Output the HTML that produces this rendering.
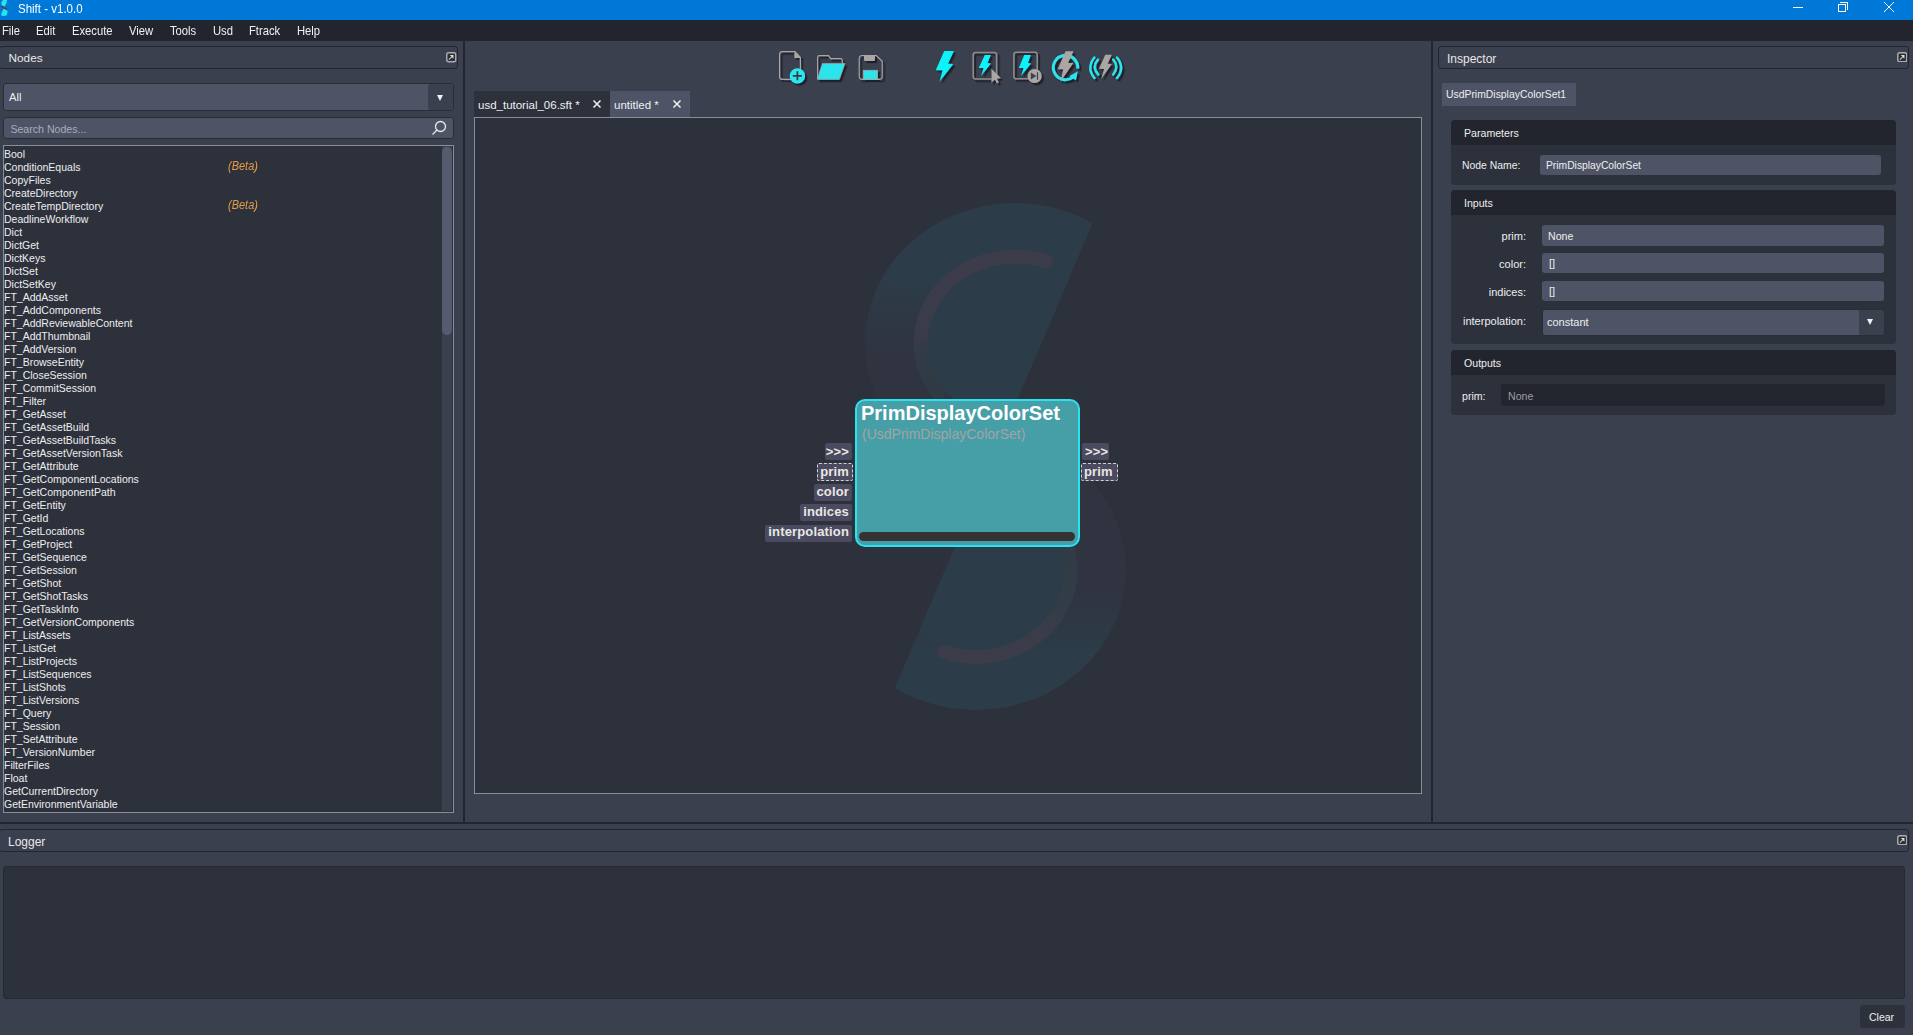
<!DOCTYPE html>
<html><head><meta charset="utf-8">
<style>
*{box-sizing:border-box;margin:0;padding:0}
html,body{width:1913px;height:1035px;overflow:hidden;background:#3b404e;font-family:"Liberation Sans",sans-serif;color:#e6e6e6}
.a{position:absolute}
.t{position:absolute;white-space:pre;line-height:1}
#title{left:0;top:0;width:1913px;height:20px;background:#0078d7}
#menu{left:0;top:20px;width:1913px;height:21px;background:#22252e}
.vsep{background:#23262e}
.hdr{background:#3b404e;border:1px solid #23262e;border-radius:3px}
.fld{background:#4e5466;border:1px solid #2a2d36;border-radius:3px}
.list{background:#2d313c;border:1px solid #8a8d93}
.node{font-size:10.5px;color:#eeeeee}
.grp{background:#2d313c;border-radius:4px}
.gh{background:#22252e;border-radius:4px 4px 0 0}
.fl{background:#4e5466;border-radius:3px}
.lbl{font-size:11px;color:#e6e6e6}
.port{background:#4a4b60;border-radius:2px;color:#ececec;font-weight:700;font-size:13px}
.pt{font-size:13px;font-weight:700;color:#e9e7e2;letter-spacing:0.15px}
.lbr{font-size:11px;color:#eeeeee}
.beta{font-size:12px;font-style:italic;color:#e29c48;transform:scaleX(0.915);transform-origin:0 0}
.flt{width:11px;height:11px;border:1.5px solid #b8b8bc;border-radius:3px}
.flt:after{content:"";position:absolute;left:2px;top:2px;width:4px;height:4px;border-top:1.2px solid #d8d8d8;border-right:1.2px solid #d8d8d8}
.tri{width:0;height:0;border-left:3.7px solid transparent;border-right:3.7px solid transparent;border-top:6.4px solid #f0f0f0}
.mi{font-size:12.4px;color:#f0f0f0;top:24.6px;transform:scaleX(0.907);transform-origin:0 0}
</style></head><body>
<!-- title bar -->
<div id="title" class="a"></div>
<svg class="a" style="left:0;top:0" width="12" height="18" viewBox="0 0 12 18"><path d="M3 0 H7 L6.5 2.5 L4.8 6.5 L2 5.8 L1.3 2.5 Z" fill="#22e6ee"/><path d="M3.5 9 L6.8 9.3 L7.6 12 L6.6 15.5 L3 16 L1 15 L2 12 Z" fill="#22e6ee"/><path d="M1.2 6 L7 9.6" stroke="#5a3f48" stroke-width="1.6"/></svg>
<div class="t" style="left:17.5px;top:2.5px;font-size:12.5px;color:#ffffff;transform:scaleX(0.92);transform-origin:0 0">Shift - v1.0.0</div>
<div class="a" style="left:1793px;top:7px;width:10px;height:1px;background:#fff"></div>
<div class="a" style="left:1838px;top:4px;width:8px;height:8px;border:1px solid #fff"></div>
<div class="a" style="left:1840px;top:2px;width:8px;height:8px;border-top:1px solid #fff;border-right:1px solid #fff"></div>
<svg class="a" style="left:1883px;top:1px" width="12" height="12" viewBox="0 0 12 12"><path d="M1 1 L11 11 M11 1 L1 11" stroke="#fff" stroke-width="1"/></svg>
<div id="menu" class="a"></div>
<div class="t mi" style="left:2px">File</div>
<div class="t mi" style="left:36px">Edit</div>
<div class="t mi" style="left:72px">Execute</div>
<div class="t mi" style="left:129px">View</div>
<div class="t mi" style="left:170px">Tools</div>
<div class="t mi" style="left:213px">Usd</div>
<div class="t mi" style="left:249px">Ftrack</div>
<div class="t mi" style="left:297px">Help</div>

<!-- left dock -->
<div class="a hdr" style="left:-1px;top:46px;width:459px;height:23px"></div>
<div class="t" style="left:8.5px;top:52.8px;font-size:11.8px;color:#e8e8e8">Nodes</div>
<svg class="a" style="left:446px;top:52px" width="10.5" height="10.5" viewBox="0 0 11 11"><rect x="0.8" y="0.8" width="9.4" height="9.4" rx="2" fill="#2c2f3a" stroke="#abacb3" stroke-width="1.5"/><path d="M4 3.2 H7.8 V7 Z" fill="#dfe4cc"/><path d="M3 8 L6 5" stroke="#c8ccc0" stroke-width="1.1"/></svg>
<div class="a fld" style="left:3px;top:83px;width:451px;height:28px"></div>
<div class="a" style="left:428px;top:84px;width:25px;height:26px;background:#3b404e;border-radius:3px"></div>
<div class="a tri" style="left:437px;top:94.5px"></div>
<div class="t" style="left:9px;top:92.4px;font-size:11.2px;color:#eeeeee">All</div>
<div class="a fld" style="left:3px;top:117px;width:451px;height:22px"></div>
<div class="t" style="left:10.4px;top:123.7px;font-size:10.6px;color:#a9adbd">Search Nodes...</div>
<svg class="a" style="left:430px;top:119px" width="18" height="18" viewBox="0 0 18 18"><circle cx="10.5" cy="7.5" r="5" fill="none" stroke="#e8e8e8" stroke-width="1.3"/><line x1="7" y1="11" x2="2.5" y2="15.5" stroke="#e8e8e8" stroke-width="1.3"/></svg>
<div class="a list" style="left:3px;top:145px;width:451px;height:668px"></div>
<div class="a" style="left:442px;top:146px;width:10px;height:665px;background:#3b404e"></div>
<div class="a" style="left:442px;top:147px;width:10px;height:188px;background:#565b70;border-radius:5px"></div>
<div class="t node" style="left:4px;top:149px">Bool</div>
<div class="t node" style="left:4px;top:162px">ConditionEquals</div>
<div class="t node" style="left:4px;top:175px">CopyFiles</div>
<div class="t node" style="left:4px;top:188px">CreateDirectory</div>
<div class="t node" style="left:4px;top:201px">CreateTempDirectory</div>
<div class="t node" style="left:4px;top:214px">DeadlineWorkflow</div>
<div class="t node" style="left:4px;top:227px">Dict</div>
<div class="t node" style="left:4px;top:240px">DictGet</div>
<div class="t node" style="left:4px;top:253px">DictKeys</div>
<div class="t node" style="left:4px;top:266px">DictSet</div>
<div class="t node" style="left:4px;top:279px">DictSetKey</div>
<div class="t node" style="left:4px;top:292px">FT_AddAsset</div>
<div class="t node" style="left:4px;top:305px">FT_AddComponents</div>
<div class="t node" style="left:4px;top:318px">FT_AddReviewableContent</div>
<div class="t node" style="left:4px;top:331px">FT_AddThumbnail</div>
<div class="t node" style="left:4px;top:344px">FT_AddVersion</div>
<div class="t node" style="left:4px;top:357px">FT_BrowseEntity</div>
<div class="t node" style="left:4px;top:370px">FT_CloseSession</div>
<div class="t node" style="left:4px;top:383px">FT_CommitSession</div>
<div class="t node" style="left:4px;top:396px">FT_Filter</div>
<div class="t node" style="left:4px;top:409px">FT_GetAsset</div>
<div class="t node" style="left:4px;top:422px">FT_GetAssetBuild</div>
<div class="t node" style="left:4px;top:435px">FT_GetAssetBuildTasks</div>
<div class="t node" style="left:4px;top:448px">FT_GetAssetVersionTask</div>
<div class="t node" style="left:4px;top:461px">FT_GetAttribute</div>
<div class="t node" style="left:4px;top:474px">FT_GetComponentLocations</div>
<div class="t node" style="left:4px;top:487px">FT_GetComponentPath</div>
<div class="t node" style="left:4px;top:500px">FT_GetEntity</div>
<div class="t node" style="left:4px;top:513px">FT_GetId</div>
<div class="t node" style="left:4px;top:526px">FT_GetLocations</div>
<div class="t node" style="left:4px;top:539px">FT_GetProject</div>
<div class="t node" style="left:4px;top:552px">FT_GetSequence</div>
<div class="t node" style="left:4px;top:565px">FT_GetSession</div>
<div class="t node" style="left:4px;top:578px">FT_GetShot</div>
<div class="t node" style="left:4px;top:591px">FT_GetShotTasks</div>
<div class="t node" style="left:4px;top:604px">FT_GetTaskInfo</div>
<div class="t node" style="left:4px;top:617px">FT_GetVersionComponents</div>
<div class="t node" style="left:4px;top:630px">FT_ListAssets</div>
<div class="t node" style="left:4px;top:643px">FT_ListGet</div>
<div class="t node" style="left:4px;top:656px">FT_ListProjects</div>
<div class="t node" style="left:4px;top:669px">FT_ListSequences</div>
<div class="t node" style="left:4px;top:682px">FT_ListShots</div>
<div class="t node" style="left:4px;top:695px">FT_ListVersions</div>
<div class="t node" style="left:4px;top:708px">FT_Query</div>
<div class="t node" style="left:4px;top:721px">FT_Session</div>
<div class="t node" style="left:4px;top:734px">FT_SetAttribute</div>
<div class="t node" style="left:4px;top:747px">FT_VersionNumber</div>
<div class="t node" style="left:4px;top:760px">FilterFiles</div>
<div class="t node" style="left:4px;top:773px">Float</div>
<div class="t node" style="left:4px;top:786px">GetCurrentDirectory</div>
<div class="t node" style="left:4px;top:799px">GetEnvironmentVariable</div>
<div class="t beta" style="left:227.5px;top:159.8px">(Beta)</div>
<div class="t beta" style="left:227.5px;top:198.8px">(Beta)</div>

<!-- separators -->
<div class="a vsep" style="left:463px;top:40px;width:2px;height:784px"></div>
<div class="a vsep" style="left:1431px;top:40px;width:2px;height:784px"></div>
<div class="a vsep" style="left:0;top:822px;width:1913px;height:2px"></div>
<!-- tabs -->
<div class="a" style="left:474px;top:91px;width:136px;height:26px;background:#2d313c"></div>
<div class="a" style="left:610px;top:91px;width:80px;height:26px;background:#4e5466"></div>
<div class="t" style="left:478px;top:100px;font-size:11.5px;color:#f0f0f0">usd_tutorial_06.sft *</div>
<div class="t" style="left:614px;top:100px;font-size:11.5px;color:#f0f0f0">untitled *</div>
<svg class="a" style="left:592px;top:99px" width="10" height="10" viewBox="0 0 10 10"><path d="M1.5 1.5 L8.5 8.5 M8.5 1.5 L1.5 8.5" stroke="#f0f0f0" stroke-width="1.5"/></svg>
<svg class="a" style="left:672px;top:99px" width="10" height="10" viewBox="0 0 10 10"><path d="M1.5 1.5 L8.5 8.5 M8.5 1.5 L1.5 8.5" stroke="#f0f0f0" stroke-width="1.5"/></svg>
<!-- canvas -->
<div class="a" style="left:474px;top:117px;width:948px;height:677px;background:#2d313c;border:1px solid #8a8d93;overflow:hidden" id="canvas"></div>

<!-- toolbar -->
<svg class="a" style="left:0;top:0" width="1200" height="90" viewBox="0 0 1200 90">
<defs><filter id="sh" x="-30%" y="-30%" width="160%" height="160%"><feDropShadow dx="2.2" dy="2.2" stdDeviation="0.7" flood-color="#1c1e26" flood-opacity="0.95"/></filter></defs>
<g filter="url(#sh)">
 <path d="M782.1 51.6 H795 L800.4 57.4 V76.5 Q800.4 79.4 797.5 79.4 H782.1 Q779.6 79.4 779.6 76.5 V54.5 Q779.6 51.6 782.1 51.6 Z" fill="none" stroke="#a9a6a4" stroke-width="1.2"/>
 <path d="M794.4 51.8 L800.6 58 H794.4 Z" fill="#a9a6a4"/>
 <circle cx="797.4" cy="75.9" r="7.7" fill="#2be8f0"/>
 <path d="M792.8 75.9 H801.9 M797.4 71.3 V80.3" stroke="#3b3a46" stroke-width="1.8"/>
</g>
<g filter="url(#sh)">
 <path d="M817.6 79 V57.5 Q817.6 55.6 819.5 55.6 H828.5 L830.6 58.6 H840.5 Q842.3 58.6 842.3 60.5 V63.4" fill="none" stroke="#a9a6a4" stroke-width="1.1"/>
 <path d="M822.4 63.5 H844.9 L839.3 79.4 H817.3 Z" fill="#2be5ec" stroke="#a9a6a4" stroke-width="0.6"/>
</g>
<g filter="url(#sh)">
 <path d="M862.3 55.5 H876.3 L882.2 61.3 V76.2 Q882.2 79.4 879 79.4 H862.3 Q859.2 79.4 859.2 76.2 V58.6 Q859.2 55.5 862.3 55.5 Z" fill="none" stroke="#a9a6a4" stroke-width="1.1"/>
 <path d="M864 55.5 H875 V59.5 Q875 61 873.5 61 H865.5 Q864 61 864 59.5 Z" fill="#a9a6a4"/>
 <rect x="863.3" y="70.3" width="14.2" height="9" fill="#2be5ec" stroke="#a9a6a4" stroke-width="0.8"/>
</g>
<g filter="url(#sh)">
 <path d="M944.2 51.1 H953.9 L947.9 63.65 L953.3 64.1 L939.5 81.7 L942.6 70.35 H935.7 Z" fill="#08f2fb"/>
</g>
<g filter="url(#sh)">
 <rect x="973.2" y="52.5" width="23.4" height="26.4" rx="2.3" fill="none" stroke="#8f8b8c" stroke-width="1.55"/>
 <path d="M984.8 55.1 H990.9 L987.4 63 L990.9 63.45 L981.1 76 L983.6 68.1 H978.7 Z" fill="#08f2fb"/>
 <path d="M991.5 68.7 L1001 78.3 L996.8 78.6 L998.8 82.6 L996.9 83.4 L995 79.4 L991.6 82.4 Z" fill="#a9a6a4"/>
</g>
<g filter="url(#sh)">
 <rect x="1013.9" y="52.3" width="23.3" height="26.4" rx="2.3" fill="none" stroke="#8f8b8c" stroke-width="1.55"/>
 <path d="M1024.2 55.1 H1030.9 L1027.9 63 L1031.1 63.45 L1021 76 L1023.6 68.1 H1018.8 Z" fill="#08f2fb"/>
 <circle cx="1034.6" cy="76" r="7.1" fill="#a9a6a4"/>
 <path d="M1030.9 72.6 V79.4 L1036.3 76 Z" fill="#3b3f4c"/>
 <rect x="1036.9" y="72.3" width="1.2" height="7.4" fill="#3b3f4c"/>
</g>
<g filter="url(#sh)">
 <path d="M1077.65 68.66 A12.2 12.2 0 1 0 1073.3 76.95" fill="none" stroke="#2be5ec" stroke-width="3"/>
 <path d="M1069.3 76.3 L1077.8 71.2 L1075.9 80.2 Z" fill="#2be5ec"/>
 <path d="M1065.6 51.3 H1073.5 L1068 63 H1073.3 L1060.4 81.7 L1063.2 69.3 H1057.7 Z" fill="#a9a6a4"/>
</g>
<g filter="url(#sh)">
 <path d="M1094.4 57.4 Q1086.2 67.7 1094.4 78.1 M1098 59.6 Q1091.5 67.1 1098.2 74.6 M1117 57.4 Q1125.2 67.7 1117 78.1 M1113.2 59.6 Q1119.4 67.1 1113.2 74.6" fill="none" stroke="#2be5ec" stroke-width="2.4" stroke-linecap="round"/>
 <path d="M1105.3 54.7 H1111.8 L1107.6 63.65 L1111.8 64.1 L1101.3 78.9 L1104.1 69.1 L1099 68.7 Z" fill="#a9a6a4"/>
</g>
</svg>

<!-- canvas logo -->
<svg class="a" style="left:475px;top:118px" width="946" height="675" viewBox="475 118 946 675">
<defs>
 <clipPath id="cu"><path d="M600 0 H1187.4 L762.2 1000 H600 Z"/></clipPath>
 <clipPath id="cl"><path d="M1187.4 0 L762.2 1000 H1300 V0 Z"/></clipPath>
 <linearGradient id="bu" x1="0" y1="280" x2="0" y2="350" gradientUnits="userSpaceOnUse"><stop offset="0" stop-color="#2c3c48"/><stop offset="1" stop-color="#2f3440"/></linearGradient>
 <linearGradient id="bl" x1="0" y1="650" x2="0" y2="595" gradientUnits="userSpaceOnUse"><stop offset="0" stop-color="#2c3c48"/><stop offset="1" stop-color="#2f3440"/></linearGradient>
 <linearGradient id="gu" x1="0" y1="250" x2="0" y2="400" gradientUnits="userSpaceOnUse"><stop offset="0" stop-color="#3c3c4a"/><stop offset="0.55" stop-color="#3b3c4a"/><stop offset="0.65" stop-color="#323b46"/><stop offset="1" stop-color="#2f3a45"/></linearGradient>
 <linearGradient id="gl" x1="0" y1="665" x2="0" y2="545" gradientUnits="userSpaceOnUse"><stop offset="0" stop-color="#3c3c4a"/><stop offset="0.27" stop-color="#3b3c4a"/><stop offset="0.42" stop-color="#333d48"/><stop offset="1" stop-color="#2f3b46"/></linearGradient>
</defs>
<g filter="url(#sh)">
 <path d="M782.1 51.6 H795 L800.4 57.4 V76.5 Q800.4 79.4 797.5 79.4 H782.1 Q779.6 79.4 779.6 76.5 V54.5 Q779.6 51.6 782.1 51.6 Z" fill="none" stroke="#a9a6a4" stroke-width="1.2"/>
 <path d="M794.4 51.8 L800.6 58 H794.4 Z" fill="#a9a6a4"/>
 <circle cx="797.4" cy="75.9" r="7.7" fill="#2be8f0"/>
 <path d="M792.8 75.9 H801.9 M797.4 71.3 V80.3" stroke="#3b3a46" stroke-width="1.8"/>
</g>
<g filter="url(#sh)">
 <path d="M817.6 79 V57.5 Q817.6 55.6 819.5 55.6 H828.5 L830.6 58.6 H840.5 Q842.3 58.6 842.3 60.5 V63.4" fill="none" stroke="#a9a6a4" stroke-width="1.1"/>
 <path d="M822.4 63.5 H844.9 L839.3 79.4 H817.3 Z" fill="#2be5ec" stroke="#a9a6a4" stroke-width="0.6"/>
</g>
<g filter="url(#sh)">
 <path d="M862.3 55.5 H876.3 L882.2 61.3 V76.2 Q882.2 79.4 879 79.4 H862.3 Q859.2 79.4 859.2 76.2 V58.6 Q859.2 55.5 862.3 55.5 Z" fill="none" stroke="#a9a6a4" stroke-width="1.1"/>
 <path d="M864 55.5 H875 V59.5 Q875 61 873.5 61 H865.5 Q864 61 864 59.5 Z" fill="#a9a6a4"/>
 <rect x="863.3" y="70.3" width="14.2" height="9" fill="#2be5ec" stroke="#a9a6a4" stroke-width="0.8"/>
</g>
<g filter="url(#sh)">
 <path d="M944.2 51.1 H953.9 L947.9 63.65 L953.3 64.1 L939.5 81.7 L942.6 70.35 H935.7 Z" fill="#08f2fb"/>
</g>
<g filter="url(#sh)">
 <rect x="973.2" y="52.5" width="23.4" height="26.4" rx="2.3" fill="none" stroke="#8f8b8c" stroke-width="1.55"/>
 <path d="M984.8 55.1 H990.9 L987.4 63 L990.9 63.45 L981.1 76 L983.6 68.1 H978.7 Z" fill="#08f2fb"/>
 <path d="M991.5 68.7 L1001 78.3 L996.8 78.6 L998.8 82.6 L996.9 83.4 L995 79.4 L991.6 82.4 Z" fill="#a9a6a4"/>
</g>
<g filter="url(#sh)">
 <rect x="1013.9" y="52.3" width="23.3" height="26.4" rx="2.3" fill="none" stroke="#8f8b8c" stroke-width="1.55"/>
 <path d="M1024.2 55.1 H1030.9 L1027.9 63 L1031.1 63.45 L1021 76 L1023.6 68.1 H1018.8 Z" fill="#08f2fb"/>
 <circle cx="1034.6" cy="76" r="7.1" fill="#a9a6a4"/>
 <path d="M1030.9 72.6 V79.4 L1036.3 76 Z" fill="#3b3f4c"/>
 <rect x="1036.9" y="72.3" width="1.2" height="7.4" fill="#3b3f4c"/>
</g>
<g filter="url(#sh)">
 <path d="M1078.3 71.5 A12 12 0 1 0 1062 79.4" fill="none" stroke="#2be5ec" stroke-width="3.3"/>
 <path d="M1064.5 78.6 Q1071 78.5 1073.5 75" fill="none" stroke="#2be5ec" stroke-width="3.3"/>
 <path d="M1069.5 74.2 L1077.3 71.8 L1076.2 80.2 Z" fill="#2be5ec"/>
 <path d="M1065.6 51.3 H1073.5 L1068 63 H1073.3 L1060.4 81.7 L1063.2 69.3 H1057.7 Z" fill="#a9a6a4"/>
</g>
<g filter="url(#sh)">
 <path d="M1094.4 57.4 Q1086.2 67.7 1094.4 78.1 M1098 59.6 Q1091.5 67.1 1098.2 74.6 M1117 57.4 Q1125.2 67.7 1117 78.1 M1113.2 59.6 Q1119.4 67.1 1113.2 74.6" fill="none" stroke="#2be5ec" stroke-width="2.4" stroke-linecap="round"/>
 <path d="M1105.3 54.7 H1111.8 L1107.6 63.65 L1111.8 64.1 L1101.3 78.9 L1104.1 69.1 L1099 68.7 Z" fill="#a9a6a4"/>
</g>
</svg>

<!-- canvas logo -->
<svg class="a" style="left:475px;top:118px" width="946" height="675" viewBox="475 118 946 675">
<defs>
 <clipPath id="cu"><path d="M600 0 H1187.4 L762.2 1000 H600 Z"/></clipPath>
 <clipPath id="cl"><path d="M1187.4 0 L762.2 1000 H1300 V0 Z"/></clipPath>
 <linearGradient id="bu" x1="0" y1="265" x2="0" y2="395" gradientUnits="userSpaceOnUse"><stop offset="0" stop-color="#2c3c48"/><stop offset="1" stop-color="#2f3440"/></linearGradient>
 <linearGradient id="bl" x1="0" y1="648" x2="0" y2="518" gradientUnits="userSpaceOnUse"><stop offset="0" stop-color="#2c3c48"/><stop offset="1" stop-color="#2f3440"/></linearGradient>
 <linearGradient id="gu" x1="0" y1="250" x2="0" y2="400" gradientUnits="userSpaceOnUse"><stop offset="0" stop-color="#3c3c4a"/><stop offset="0.5" stop-color="#3b3c4a"/><stop offset="0.68" stop-color="#313a46"/><stop offset="1" stop-color="#2e3844"/></linearGradient>
 <linearGradient id="gl" x1="0" y1="663" x2="0" y2="513" gradientUnits="userSpaceOnUse"><stop offset="0" stop-color="#3c3c4a"/><stop offset="0.5" stop-color="#3b3c4a"/><stop offset="0.68" stop-color="#313a46"/><stop offset="1" stop-color="#2e3844"/></linearGradient>
</defs>
<g clip-path="url(#cu)">
 <ellipse cx="1015" cy="343" rx="150" ry="140" fill="url(#bu)"/>
 <ellipse cx="1015" cy="343" rx="88" ry="79.5" fill="#2c3c48"/>
 <path d="M1046 261.2 A95 86.5 0 0 0 938 393" fill="none" stroke="url(#gu)" stroke-width="14" stroke-linecap="round"/>
</g>
<g clip-path="url(#cl)">
 <ellipse cx="975.7" cy="570" rx="150" ry="140" fill="url(#bl)"/>
 <ellipse cx="975.7" cy="570" rx="88" ry="79.5" fill="#2c3c48"/>
 <path d="M944.2 652 A95 86.5 0 0 0 1052.7 520" fill="none" stroke="url(#gl)" stroke-width="14" stroke-linecap="round"/>
</g>
</svg>
<!-- node -->
<div class="a" style="left:855px;top:399px;width:225px;height:148px;background:#469ea7;border:2px solid #2be3f0;border-radius:10px"></div>
<div class="t" style="left:861px;top:402.5px;font-size:20px;font-weight:700;color:#ffffff">PrimDisplayColorSet</div>
<div class="t" style="left:862px;top:427px;font-size:14px;color:#a4a4a4">(UsdPrimDisplayColorSet)</div>
<div class="a" style="left:859px;top:532px;width:216px;height:8.5px;background:#333333;border-radius:5px"></div>
<!-- ports -->
<div class="a port" style="left:825px;top:443px;width:27px;height:17px"></div>
<div class="a port" style="left:817px;top:463px;width:36px;height:18px;border:1.2px dashed #d0d0d4"></div>
<div class="a port" style="left:814px;top:484px;width:38px;height:16.5px"></div>
<div class="a port" style="left:800px;top:504px;width:52px;height:17px"></div>
<div class="a port" style="left:764.5px;top:525px;width:87.5px;height:16.5px"></div>
<div class="a port" style="left:1082px;top:443px;width:27px;height:17px"></div>
<div class="a port" style="left:1081px;top:463px;width:36.5px;height:18px;border:1.2px dashed #d0d0d4"></div>
<div class="t pt" style="right:1064px;top:445px">&gt;&gt;&gt;</div>
<div class="t pt" style="right:1064px;top:464.5px">prim</div>
<div class="t pt" style="right:1064px;top:484.5px">color</div>
<div class="t pt" style="right:1064px;top:504.5px">indices</div>
<div class="t pt" style="right:1064px;top:525px">interpolation</div>
<div class="t pt" style="left:1085px;top:445px">&gt;&gt;&gt;</div>
<div class="t pt" style="left:1084px;top:464.5px">prim</div>

<!-- inspector -->
<div class="a hdr" style="left:1438px;top:46px;width:471px;height:23px"></div>
<div class="t" style="left:1447px;top:53px;font-size:12px;color:#e8e8e8">Inspector</div>
<svg class="a" style="left:1896.5px;top:51.5px" width="10.5" height="10.5" viewBox="0 0 11 11"><rect x="0.8" y="0.8" width="9.4" height="9.4" rx="2" fill="#2c2f3a" stroke="#abacb3" stroke-width="1.5"/><path d="M4 3.2 H7.8 V7 Z" fill="#dfe4cc"/><path d="M3 8 L6 5" stroke="#c8ccc0" stroke-width="1.1"/></svg>
<div class="a" style="left:1442px;top:83px;width:134px;height:23px;background:#4e5466"></div>
<div class="t" style="left:1446px;top:89.5px;font-size:10.4px;color:#eeeeee">UsdPrimDisplayColorSet1</div>
<!-- params group -->
<div class="a grp" style="left:1451px;top:120px;width:445px;height:64.5px"></div>
<div class="a gh" style="left:1451px;top:120px;width:445px;height:25px"></div>
<div class="t" style="left:1464px;top:127.5px;font-size:10.6px;color:#eeeeee">Parameters</div>
<div class="t" style="left:1462px;top:161px;font-size:10.4px;color:#eeeeee">Node Name:</div>
<div class="a fl" style="left:1540px;top:155px;width:341px;height:20px"></div>
<div class="t" style="left:1546px;top:161px;font-size:10.3px;color:#eeeeee">PrimDisplayColorSet</div>
<!-- inputs group -->
<div class="a grp" style="left:1451px;top:190px;width:445px;height:154px"></div>
<div class="a gh" style="left:1451px;top:190px;width:445px;height:25px"></div>
<div class="t" style="left:1464px;top:197.5px;font-size:10.6px;color:#eeeeee">Inputs</div>
<div class="t lbr" style="right:387px;top:230.5px">prim:</div>
<div class="a fl" style="left:1542px;top:225px;width:342px;height:20.5px"></div>
<div class="t" style="left:1548px;top:230.5px;font-size:10.6px;color:#eeeeee">None</div>
<div class="t lbr" style="right:387px;top:258.5px">color:</div>
<div class="a fl" style="left:1542px;top:253px;width:342px;height:20px"></div>
<div class="t" style="left:1549px;top:258px;font-size:11px;color:#eeeeee">[]</div>
<div class="t lbr" style="right:387px;top:286.5px">indices:</div>
<div class="a fl" style="left:1542px;top:281px;width:342px;height:20px"></div>
<div class="t" style="left:1549px;top:286px;font-size:11px;color:#eeeeee">[]</div>
<div class="t lbr" style="right:387px;top:315.5px">interpolation:</div>
<div class="a fld" style="left:1542px;top:308.5px;width:342px;height:27px"></div>
<div class="a" style="left:1859px;top:309.5px;width:25px;height:25.5px;background:#3b404e;border-radius:0 3px 3px 0"></div>
<div class="a tri" style="left:1867px;top:319px"></div>
<div class="t" style="left:1547px;top:317px;font-size:11px;color:#eeeeee">constant</div>
<!-- outputs group -->
<div class="a grp" style="left:1451px;top:350px;width:445px;height:64.5px"></div>
<div class="a gh" style="left:1451px;top:350px;width:445px;height:25px"></div>
<div class="t" style="left:1464px;top:357.5px;font-size:10.6px;color:#eeeeee">Outputs</div>
<div class="t" style="left:1462px;top:390.5px;font-size:10.6px;color:#eeeeee">prim:</div>
<div class="a" style="left:1501px;top:384px;width:384px;height:21.5px;background:#23262f;border-radius:3px"></div>
<div class="t" style="left:1508px;top:390.5px;font-size:10.6px;color:#9a9ca4">None</div>
<!-- logger -->
<div class="a hdr" style="left:-1px;top:829px;width:1910px;height:23px"></div>
<div class="t" style="left:8px;top:836px;font-size:12px;color:#e8e8e8">Logger</div>
<svg class="a" style="left:1896.5px;top:834.5px" width="10.5" height="10.5" viewBox="0 0 11 11"><rect x="0.8" y="0.8" width="9.4" height="9.4" rx="2" fill="#2c2f3a" stroke="#abacb3" stroke-width="1.5"/><path d="M4 3.2 H7.8 V7 Z" fill="#dfe4cc"/><path d="M3 8 L6 5" stroke="#c8ccc0" stroke-width="1.1"/></svg>
<div class="a" style="left:3px;top:866px;width:1902px;height:133px;background:#2d313c;border:1px solid #262931;border-radius:3px"></div>
<div class="a" style="left:1860px;top:1005px;width:45px;height:23px;background:#2d313c;border-radius:3px"></div>
<div class="t" style="left:1869px;top:1011.5px;font-size:10.5px;color:#eeeeee">Clear</div>
</body></html>
